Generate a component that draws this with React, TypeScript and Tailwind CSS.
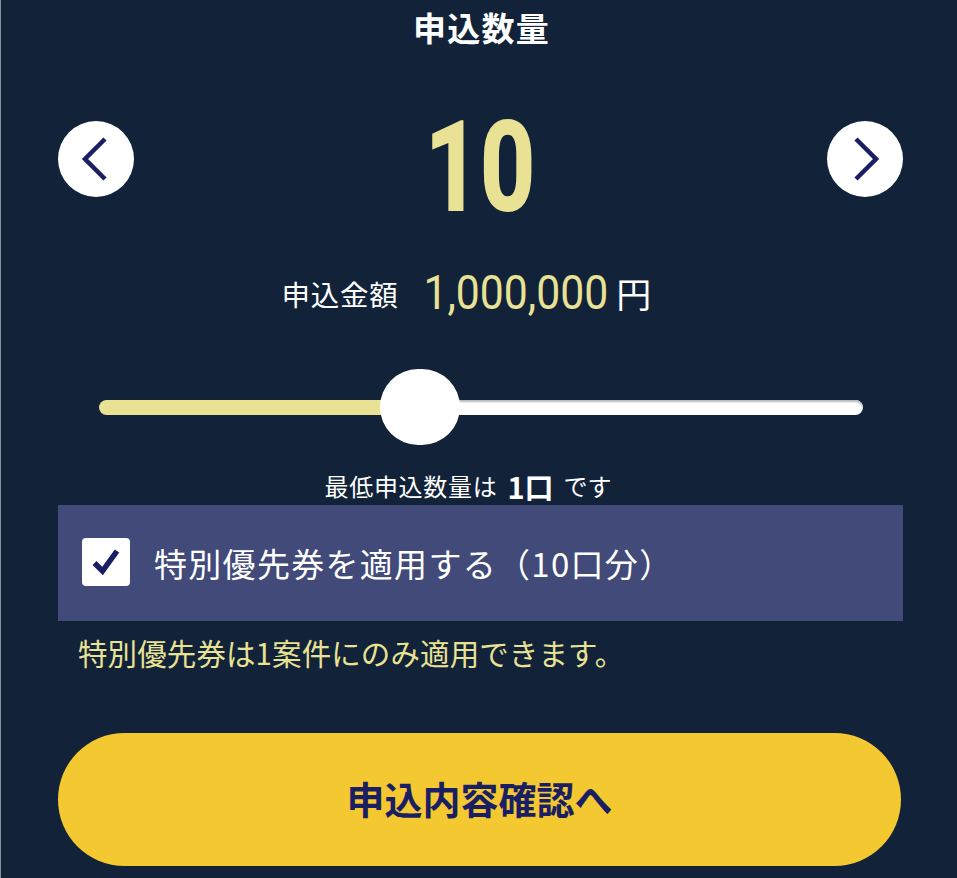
const font = { jp: "font-['Noto_Sans_CJK_JP','Noto_Sans',sans-serif]" };

function ArrowButton({ dir }: { dir: "left" | "right" }) {
  return (
    <button className="flex h-[76px] w-[76px] items-center justify-center rounded-full bg-white">
      <svg width="76" height="76" viewBox="0 0 76 76" fill="none">
        <path
          d={dir === "left" ? "M47 19.5L27 39.5L47 59.5" : "M29 19.5L49 39.5L29 59.5"}
          transform="translate(0 -1.5)"
          stroke="#1a1f63"
          strokeWidth="4.5"
        />
      </svg>
    </button>
  );
}

export default function App() {
  return (
    <div className={`${font.jp} h-[878px] w-[957px] overflow-hidden border-l border-[#8a929c] bg-[#122339] text-white`}>
      {/* Title */}
      <h1 className="mb-[6px] flex h-[54px] items-center justify-center pl-[5px] text-[33px] leading-none font-bold tracking-[1.25px]">
        申込数量
      </h1>

      {/* Quantity */}
      <div className="flex h-[198px] items-center justify-between pr-[54px] pl-[57px]">
        <ArrowButton dir="left" />
        <div className="flex h-[198px] w-[200px] items-center justify-center pt-[17px] font-['Roboto',sans-serif] text-[124px] leading-none font-bold text-[#e9e295] [-webkit-text-stroke:2px_#e9e295]">
          <span className="block scale-x-[0.77]">10</span>
        </div>
        <ArrowButton dir="right" />
      </div>

      {/* Amount */}
      <div className="flex h-[72px] items-center justify-center pr-[25px]">
        <span className="text-[28.5px] leading-none tracking-[0.75px]">申込金額</span>
        <span className="mr-[-13px] ml-[13px] mb-[3px] block origin-center scale-x-[0.89] font-['Roboto',sans-serif] text-[48px] leading-none text-[#e9e295]">
          1,000,000
        </span>
        <span className="mb-[3px] ml-[10px] text-[35px] leading-none">円</span>
      </div>

      {/* Slider */}
      <div className="relative mt-[39px] ml-[98px] flex h-[76px] w-[764px] items-center">
        <div className="h-[15px] w-[300px] rounded-l-full bg-[#e9e295]" />
        <div className="h-[15px] flex-1 rounded-r-full bg-white shadow-[inset_0_2px_2px_#b5b8bc]" />
        <div className="absolute top-0 left-[281px] h-[76px] w-[80px] rounded-full bg-white" />
      </div>

      {/* Minimum */}
      <div className="mt-[24px] mb-[2px] flex h-[34px] items-center justify-center pr-[22px] text-[24px] leading-none">
        <span className="tracking-[0.7px]">最低申込数量は</span>
        <span className="mx-[10px] text-[29px] font-bold">1口</span>
        <span>です</span>
      </div>

      {/* Priority ticket */}
      <label className="ml-[57px] flex h-[116px] w-[845px] items-center bg-[#414a79]">
        <span className="mb-[3px] ml-[24px] flex h-[48px] w-[48px] items-center justify-center rounded-[4px] bg-white">
          <svg width="48" height="48" viewBox="0 0 48 48" fill="none">
            <path d="M12.5 25L20.5 33L35 13" stroke="#1a1f63" strokeWidth="5.5" />
          </svg>
        </span>
        <span className="ml-[24px] text-[33px] leading-none tracking-[1.3px] whitespace-nowrap">
          特別優先券を適用する（10口分）
        </span>
      </label>

      <p className="mt-[13px] ml-[77px] text-[29.5px] leading-[36px] tracking-[0.1px] text-[#e9e295]">
        特別優先券は1案件にのみ適用できます。
      </p>

      {/* Submit */}
      <button className="mt-[63px] ml-[57px] flex h-[133px] w-[843px] items-center justify-center rounded-full bg-[#f4c831] pb-[4px] text-[38px] leading-none font-bold text-[#1a1f63]">
        申込内容確認へ
      </button>
    </div>
  );
}
